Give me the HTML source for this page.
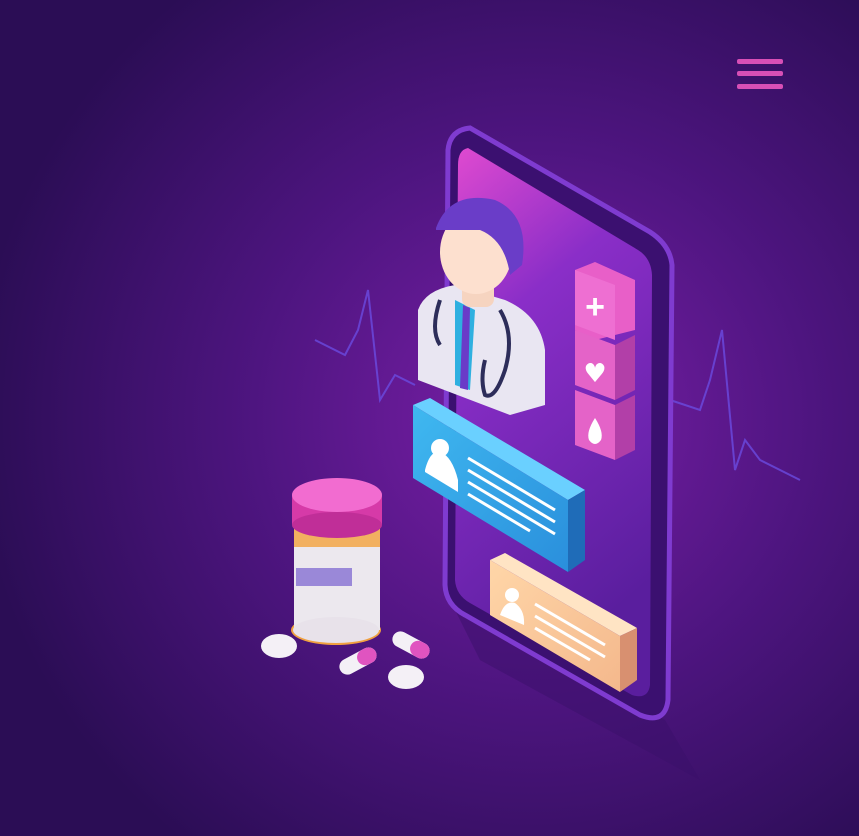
<!DOCTYPE html>
<html><head><meta charset="utf-8"><style>
html,body{margin:0;padding:0;width:859px;height:836px;overflow:hidden;background:#2a0d52}
svg{display:block}
</style></head><body>
<svg width="859" height="836" viewBox="0 0 859 836" xmlns="http://www.w3.org/2000/svg">
<defs>
<radialGradient id="bg" cx="0.62" cy="0.5" r="0.65">
<stop offset="0" stop-color="#7a1fa8"/><stop offset="0.5" stop-color="#4e1580"/><stop offset="1" stop-color="#2b0d55"/>
</radialGradient>
<linearGradient id="scr" x1="0" y1="0" x2="0.3" y2="1">
<stop offset="0" stop-color="#e04ad0"/><stop offset="0.35" stop-color="#8a2ec8"/><stop offset="1" stop-color="#5a1e9e"/>
</linearGradient>
<linearGradient id="blue" x1="0" y1="0" x2="1" y2="1"><stop offset="0" stop-color="#3fb8f0"/><stop offset="1" stop-color="#2a8fdc"/></linearGradient>
<linearGradient id="peach" x1="0" y1="0" x2="1" y2="1"><stop offset="0" stop-color="#ffd6a8"/><stop offset="1" stop-color="#f4b88c"/></linearGradient>
</defs>
<rect width="859" height="836" fill="url(#bg)"/>
<!-- hamburger -->
<g fill="#d84fb6"><rect x="737" y="59" width="46" height="5" rx="2"/><rect x="737" y="71" width="46" height="5" rx="2"/><rect x="737" y="84" width="46" height="5" rx="2"/></g>
<!-- heartbeat lines -->
<polyline points="315,340 345,355 358,330 368,290 380,400 395,375 415,385" fill="none" stroke="#6a4be0" stroke-width="2" opacity="0.8"/>
<polyline points="670,400 700,410 710,380 722,330 735,470 745,440 760,460 800,480" fill="none" stroke="#6a4be0" stroke-width="2" opacity="0.8"/>
<!-- phone shadow -->
<path d="M450,600 L665,720 L700,780 L480,660Z" fill="#3a0f6a" opacity="0.5"/>
<!-- phone body -->
<path d="M470,128 Q450,130 448,150 L445,585 Q446,605 465,615 L640,715 Q665,725 668,700 L672,265 Q670,245 650,232 Z" fill="#3b1070" stroke="#7f3bd0" stroke-width="5"/>
<path d="M468,148 Q458,150 458,165 L455,580 Q456,595 470,603 L632,695 Q648,700 650,685 L652,275 Q651,258 638,250 Z" fill="url(#scr)"/>
<!-- doctor -->
<path d="M418,310 Q425,290 455,285 L505,300 Q540,315 545,350 L545,405 L510,415 L418,380 Z" fill="#e9e6f2"/>
<path d="M455,300 L475,310 L470,390 L455,385 Z" fill="#2fb0e0"/>
<path d="M463,305 L470,308 L468,390 L460,388 Z" fill="#6a3bc8"/>
<rect x="462" y="265" width="32" height="42" rx="8" fill="#f6d4c0"/>
<ellipse cx="476" cy="252" rx="36" ry="42" fill="#fde0cf"/>
<path d="M436,228 Q450,190 495,200 Q530,215 522,265 L510,275 Q505,240 480,230 Q455,230 436,230Z" fill="#6a3dc8"/>
<path d="M440,300 Q430,330 440,345 M500,310 Q515,335 505,370 Q495,400 485,395 Q480,380 485,360" fill="none" stroke="#2d2d5a" stroke-width="4"/>
<!-- pink blocks -->
<g>
<path d="M575,270 L595,262 L635,280 L635,330 L595,340 L575,330Z" fill="#e85fc8"/>
<path d="M575,270 L615,285 L615,340 L575,325Z" fill="#ee6fd2"/>
<text x="595" y="318" font-family="Liberation Sans,sans-serif" font-size="34" font-weight="bold" fill="#fff" text-anchor="middle">+</text>
<path d="M575,330 L615,345 L615,400 L575,385Z" fill="#e463c8"/><path d="M615,345 L635,335 L635,390 L615,400Z" fill="#b23fa8"/>
<text x="595" y="382" font-family="DejaVu Sans,sans-serif" font-size="26" fill="#fff" text-anchor="middle">♥</text>
<path d="M575,390 L615,405 L615,460 L575,445Z" fill="#e463c8"/><path d="M615,405 L635,395 L635,450 L615,460Z" fill="#b23fa8"/>
<path d="M595,418 Q586,432 589,440 Q595,448 601,440 Q604,432 595,418Z" fill="#fff"/>
</g>
<!-- blue card -->
<path d="M413,405 L430,398 L585,490 L568,500 Z" fill="#6ad0ff"/>
<path d="M413,405 L568,500 L568,572 L413,478Z" fill="url(#blue)"/>
<path d="M568,500 L585,490 L585,560 L568,572Z" fill="#1f6cb8"/>
<path d="M425,470 Q430,450 440,452 Q452,456 458,480 L458,492 L425,472Z" fill="#fff"/>
<circle cx="440" cy="448" r="9" fill="#fff"/>
<g stroke="#fff" stroke-width="3"><line x1="468" y1="458" x2="555" y2="510"/><line x1="468" y1="470" x2="555" y2="522"/><line x1="468" y1="482" x2="555" y2="534"/><line x1="468" y1="494" x2="530" y2="531"/></g>
<!-- peach card -->
<path d="M490,560 L505,553 L637,628 L620,636Z" fill="#ffe4c4"/>
<path d="M490,560 L620,636 L620,692 L490,615Z" fill="url(#peach)"/>
<path d="M620,636 L637,628 L637,680 L620,692Z" fill="#d89070"/>
<circle cx="512" cy="595" r="7" fill="#fff"/><path d="M500,615 Q505,600 515,603 Q525,610 524,625Z" fill="#fff"/>
<g stroke="#fff" stroke-width="3"><line x1="535" y1="604" x2="605" y2="645"/><line x1="535" y1="616" x2="605" y2="657"/><line x1="535" y1="628" x2="590" y2="660"/></g>
<!-- bottle -->
<ellipse cx="336" cy="630" rx="45" ry="15" fill="#f0a040"/>
<rect x="294" y="515" width="86" height="115" fill="#ece8ee"/>
<rect x="294" y="525" width="86" height="22" fill="#f2b060"/>
<rect x="296" y="568" width="56" height="18" fill="#9a88d8"/>
<ellipse cx="336" cy="630" rx="43" ry="13" fill="#e8e2ea"/>
<rect x="292" y="495" width="90" height="30" fill="#d63aa8"/>
<ellipse cx="337" cy="525" rx="45" ry="13" fill="#c02e98"/>
<ellipse cx="337" cy="495" rx="45" ry="17" fill="#f26cd0"/>
<!-- pills -->
<ellipse cx="279" cy="646" rx="18" ry="12" fill="#f4f0f6"/>
<ellipse cx="406" cy="677" rx="18" ry="12" fill="#f4f0f6"/>
<g transform="rotate(-28 358 661)"><rect x="338" y="653" width="40" height="16" rx="8" fill="#f4f0f6"/><rect x="358" y="653" width="20" height="16" rx="8" fill="#e054c0"/></g>
<g transform="rotate(28 411 645)"><rect x="391" y="637" width="40" height="16" rx="8" fill="#f4f0f6"/><rect x="411" y="637" width="20" height="16" rx="8" fill="#e054c0"/></g>
</svg>
</body></html>
